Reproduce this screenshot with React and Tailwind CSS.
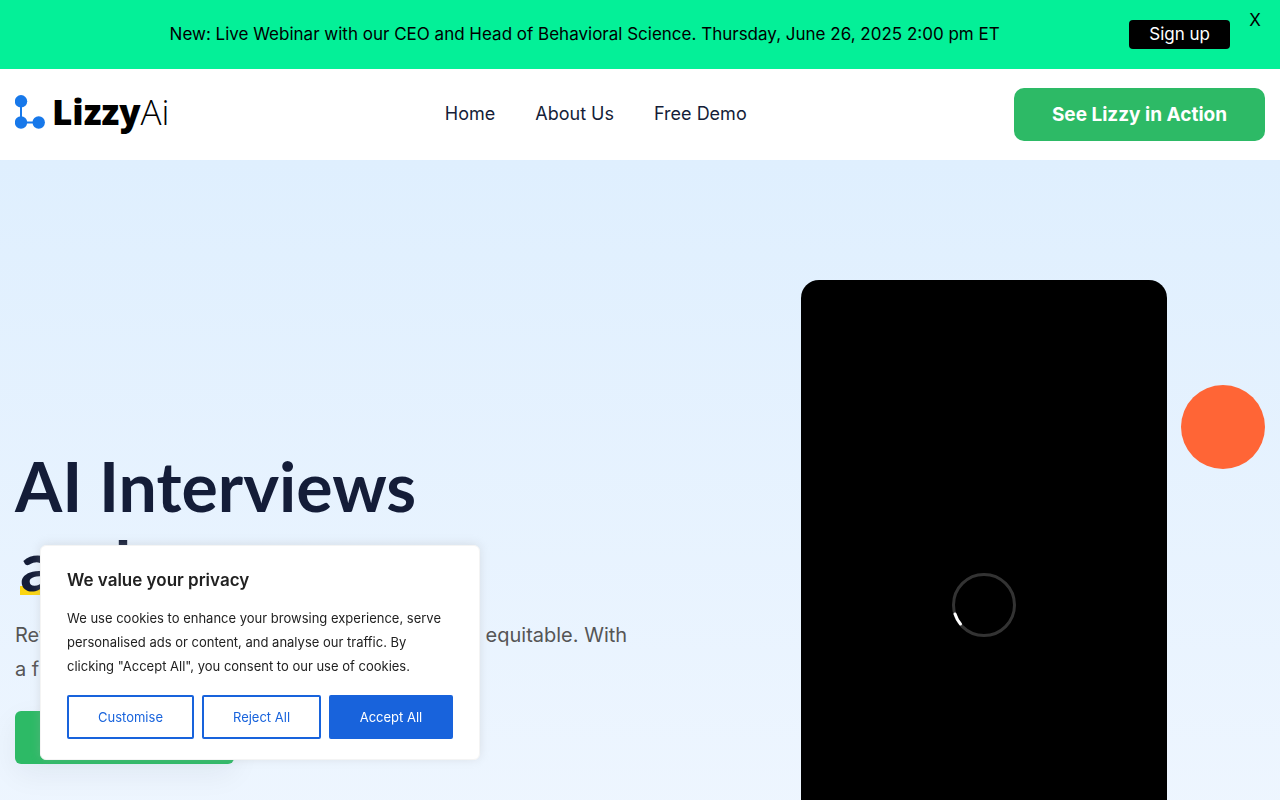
const links = ['Home', 'About Us', 'Free Demo'];

function Banner() {
  return (
    <div className="flex items-start bg-[#04f098] pt-3 pb-5 pl-24 text-[17px] text-black font-['Inter',sans-serif]">
      <p className="mt-3 flex-1 pr-14 text-center leading-5">
        New: Live Webinar with our CEO and Head of Behavioral Science. Thursday, June 26, 2025 2:00 pm ET
      </p>
      <a href="#signup" className="mt-2 rounded bg-black px-5 leading-[29px] text-white">
        Sign up
      </a>
      <button type="button" className="w-[50px] leading-4">
        X
      </button>
    </div>
  );
}

function Logo() {
  return (
    <a href="#home" aria-label="Lizzy Ai" className="flex h-10 items-start gap-[7px]">
      <svg className="h-[34px] w-[30px]" viewBox="0 0 30 34" fill="#1778ea" stroke="#1778ea">
        <path d="M6 6V27.500H24" fill="none" strokeWidth="2" />
        <circle cx="6" cy="6.300" r="6.200" stroke="none" />
        <circle cx="6" cy="27.500" r="6.200" stroke="none" />
        <circle cx="23.700" cy="27.500" r="6.200" stroke="none" />
      </svg>
      <span className="text-[35px] leading-[34px] text-black font-['Open_Sans',sans-serif]">
        <span className="font-extrabold">Lizzy</span>
        <span className="font-light">Ai</span>
      </span>
    </a>
  );
}

function Header() {
  return (
    <header className="flex items-center justify-between bg-white px-[15px] py-[19px]">
      <Logo />
      <nav className="flex gap-10 pb-0.5 pl-2 text-lg leading-6 text-[#141d38] font-['Inter',sans-serif]">
        {links.map((l) => (
          <a key={l} href="#nav">
            {l}
          </a>
        ))}
      </nav>
      <a
        href="#demo"
        className="w-[251px] rounded-[10px] bg-[#2dba66] text-center text-[19px] leading-[53px] font-bold text-white font-['Inter',sans-serif]"
      >
        See Lizzy in Action
      </a>
    </header>
  );
}

function Hero() {
  return (
    <main className="flex items-center justify-between bg-linear-to-b from-[#dfeffe] to-[#f3f8ff] px-[15px] py-[120px]">
      <div className="w-[640px]">
        <h1 className="text-[68px] leading-[79px] font-bold text-[#141d38] font-['Lato',sans-serif]">
          AI Interviews
          <br />
          <span className="ml-[5px] bg-linear-to-t from-[#fbd512] to-[#fbd512] bg-[length:100%_9px] bg-[position:0_86%] bg-no-repeat">
            and
          </span>
        </h1>
        <p className="mt-[14px] text-xl leading-[34px] text-[#555] font-['Inter',sans-serif]">
          Revolutionize hiring to make it fair, fast, and more equitable. With
          <br />
          a fully automated interview
        </p>
        <a
          href="#demo"
          className="mt-[25px] block w-[219px] rounded-md bg-[#2dba66] text-center text-[19px] leading-[53px] font-bold text-white shadow-[0_10px_30px_rgba(20,29,56,0.06)] font-['Inter',sans-serif]"
        >
          Free Demo
        </a>
      </div>
      <div className="relative mr-[98px] flex aspect-[366/650] w-[366px] items-center justify-center rounded-[18px] bg-black">
        <svg className="h-16 w-16" viewBox="0 0 64 64" fill="none">
          <circle cx="32" cy="32" r="30.5" stroke="#333" strokeWidth="3" />
          <path d="M3 41Q5 47 8.500 51" stroke="#fff" strokeWidth="3" strokeLinecap="round" />
        </svg>
        <span className="absolute top-[105px] -right-[98px] h-[84px] w-[84px] rounded-full bg-[#ff6536]" />
      </div>
    </main>
  );
}

function CookieNotice() {
  return (
    <section
      aria-label="Privacy"
      className="fixed bottom-10 left-10 w-[440px] rounded-md border border-[#f4f4f4] bg-white px-[26px] pt-[22px] pb-5 text-[#212121] shadow-[0_-1px_10px_rgba(172,171,171,0.3)] font-['Inter',sans-serif]"
    >
      <h2 className="text-[17px] leading-6 font-semibold">We value your privacy</h2>
      <p className="mt-[14px] text-[13px] leading-6">
        We use cookies to enhance your browsing experience, serve personalised ads or content, and analyse our
        traffic. By clicking "Accept All", you consent to our use of cookies.
      </p>
      <div className="mt-[17px] flex gap-2 text-[13px] leading-6 text-[#1863dc]">
        <button type="button" className="h-11 w-[127px] rounded-xs border-2 border-[#1863dc]">
          Customise
        </button>
        <button type="button" className="h-11 w-[119px] rounded-xs border-2 border-[#1863dc]">
          Reject All
        </button>
        <button type="button" className="h-11 flex-1 rounded-xs border-2 border-[#1863dc] bg-[#1863dc] text-white">
          Accept All
        </button>
      </div>
    </section>
  );
}

export default function App() {
  return (
    <div className="min-h-screen">
      <Banner />
      <Header />
      <Hero />
      <CookieNotice />
    </div>
  );
}
